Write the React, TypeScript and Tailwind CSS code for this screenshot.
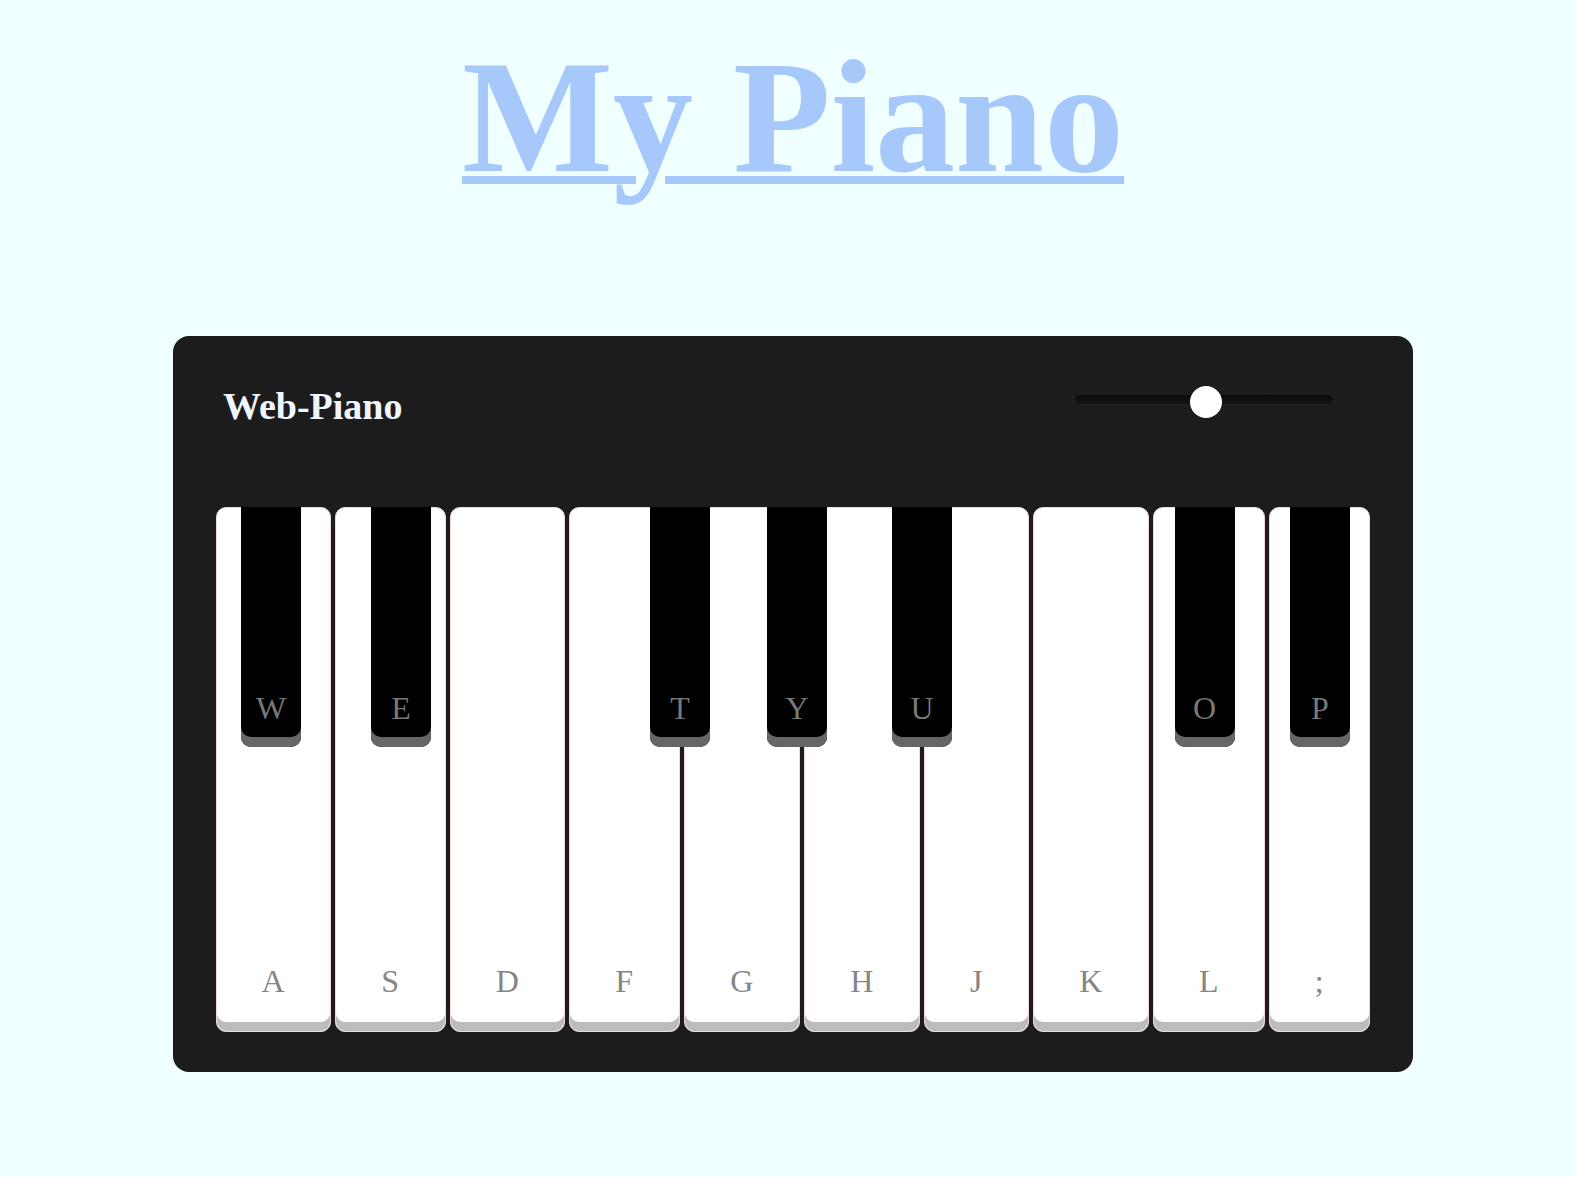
import React from "react";

type WhiteKey = { label: string; width: string };
type BlackKey = { label: string; left: string };

const whiteKeys: WhiteKey[] = [
  { label: "A", width: "w-[115px]" },
  { label: "S", width: "w-[110.5px]" },
  { label: "D", width: "w-[114.5px]" },
  { label: "F", width: "w-[110.5px]" },
  { label: "G", width: "w-[115.5px]" },
  { label: "H", width: "w-[115.5px]" },
  { label: "J", width: "w-[104.5px]" },
  { label: "K", width: "w-[115.5px]" },
  { label: "L", width: "w-[111.5px]" },
  { label: ";", width: "w-[100.5px]" },
];

const blackKeys: BlackKey[] = [
  { label: "W", left: "left-[25.5px]" },
  { label: "E", left: "left-[155.5px]" },
  { label: "T", left: "left-[434.5px]" },
  { label: "Y", left: "left-[551.5px]" },
  { label: "U", left: "left-[676.5px]" },
  { label: "O", left: "left-[959px]" },
  { label: "P", left: "left-[1074.5px]" },
];

const serif = "font-['Liberation_Serif','Times_New_Roman',serif]";

function VolumeSlider() {
  return (
    <div className="relative w-[258px] h-[32px] mr-[37.5px] -mt-[1px]">
      <div className="absolute left-0 right-0 top-[9px] h-[9px] rounded-[5px] bg-gradient-to-b from-[#0a0a0a] to-[#151515]" />
      <div className="absolute left-[114.5px] top-0 w-[32px] h-[32px] rounded-full bg-white" />
    </div>
  );
}

function Keyboard() {
  return (
    <div className="relative flex gap-[4.5px] mt-[81.5px]">
      {whiteKeys.map((key) => (
        <div
          key={key.label}
          className={`${key.width} h-[525px] flex flex-col justify-end items-center pb-[33.5px] bg-white rounded-[10px] border-[1.5px] border-[#f4d8d8] shadow-[inset_0_-9px_0_#bcbcbc]`}
        >
          <span className="text-[32px] leading-none text-[#858585]">{key.label}</span>
        </div>
      ))}
      {blackKeys.map((key) => (
        <div
          key={key.label}
          className={`absolute top-0 ${key.left} w-[60px] h-[240px] flex flex-col justify-end items-center pb-[23px] bg-black rounded-b-[10px] shadow-[inset_0_-10px_0_#666666]`}
        >
          <span className="text-[32px] leading-none text-[#787878]">{key.label}</span>
        </div>
      ))}
    </div>
  );
}

export default function App() {
  return (
    <div className={`min-h-screen bg-[#f0ffff] pl-[10px] pt-[37px] flex flex-col items-center ${serif}`}>
      <h1 className="text-[160px] leading-none font-bold text-[#a6c8fa] underline decoration-[8px] underline-offset-[5px]">
        My Piano
      </h1>
      <div className="mt-[139px] w-[1240px] bg-[#1c1c1c] rounded-[16px] pt-[51px] px-[42.5px] pb-[40px] flex flex-col">
        <div className="flex items-start justify-between">
          <h2 className="ml-[7.5px] text-[38px] leading-none font-bold text-[#f0f6ff]">Web-Piano</h2>
          <VolumeSlider />
        </div>
        <Keyboard />
      </div>
    </div>
  );
}
